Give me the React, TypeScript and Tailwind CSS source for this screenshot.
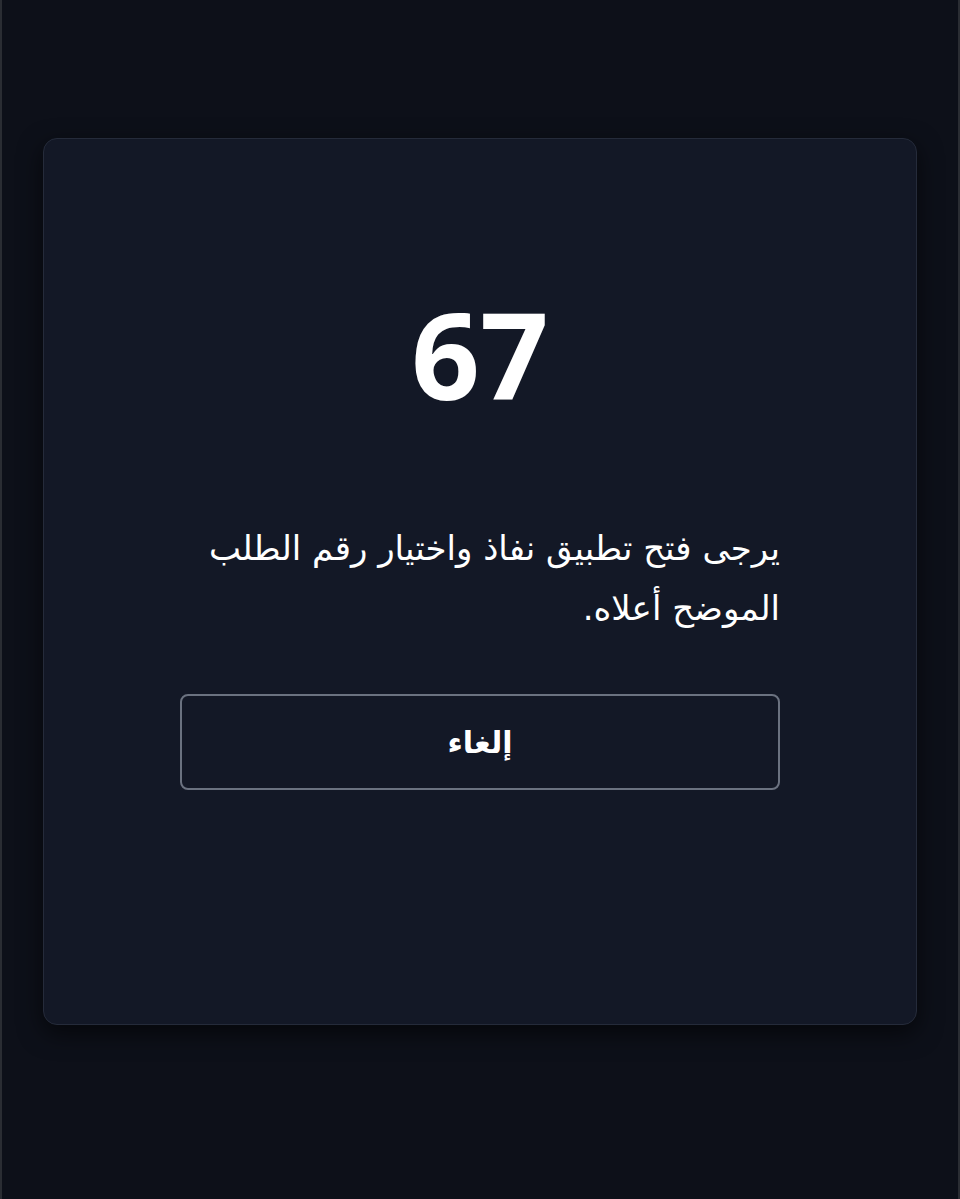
export default function App() {
  return (
    <main className="min-h-[1199px] border-x-2 border-[#2a2d33] bg-[#0d1019] px-[41px] pt-[138px] font-['Noto_Sans','DejaVu_Sans',sans-serif]">
      <section className="flex h-[887px] flex-col items-center rounded-[14px] border border-[#252b3a] bg-[#131826] pt-[155px] shadow-[0_8px_24px_rgba(0,0,0,0.6)]">
        <h1 className="font-['Noto_Sans',sans-serif] text-[120px] font-bold leading-none text-white">67</h1>
        <p
          dir="rtl"
          className="mt-[104px] w-[600px] text-right font-['DejaVu_Sans','Noto_Sans',sans-serif] text-[34px] leading-[60px] text-white"
        >
          يرجى فتح تطبيق نفاذ واختيار رقم الطلب الموضح أعلاه.
        </p>
        <button
          dir="rtl"
          className="mt-[56px] flex h-[96px] w-[600px] items-center justify-center rounded-[8px] border-2 border-[#6b7280] font-['DejaVu_Sans',sans-serif] text-[30px] font-bold text-white"
        >
          إلغاء
        </button>
      </section>
    </main>
  );
}
